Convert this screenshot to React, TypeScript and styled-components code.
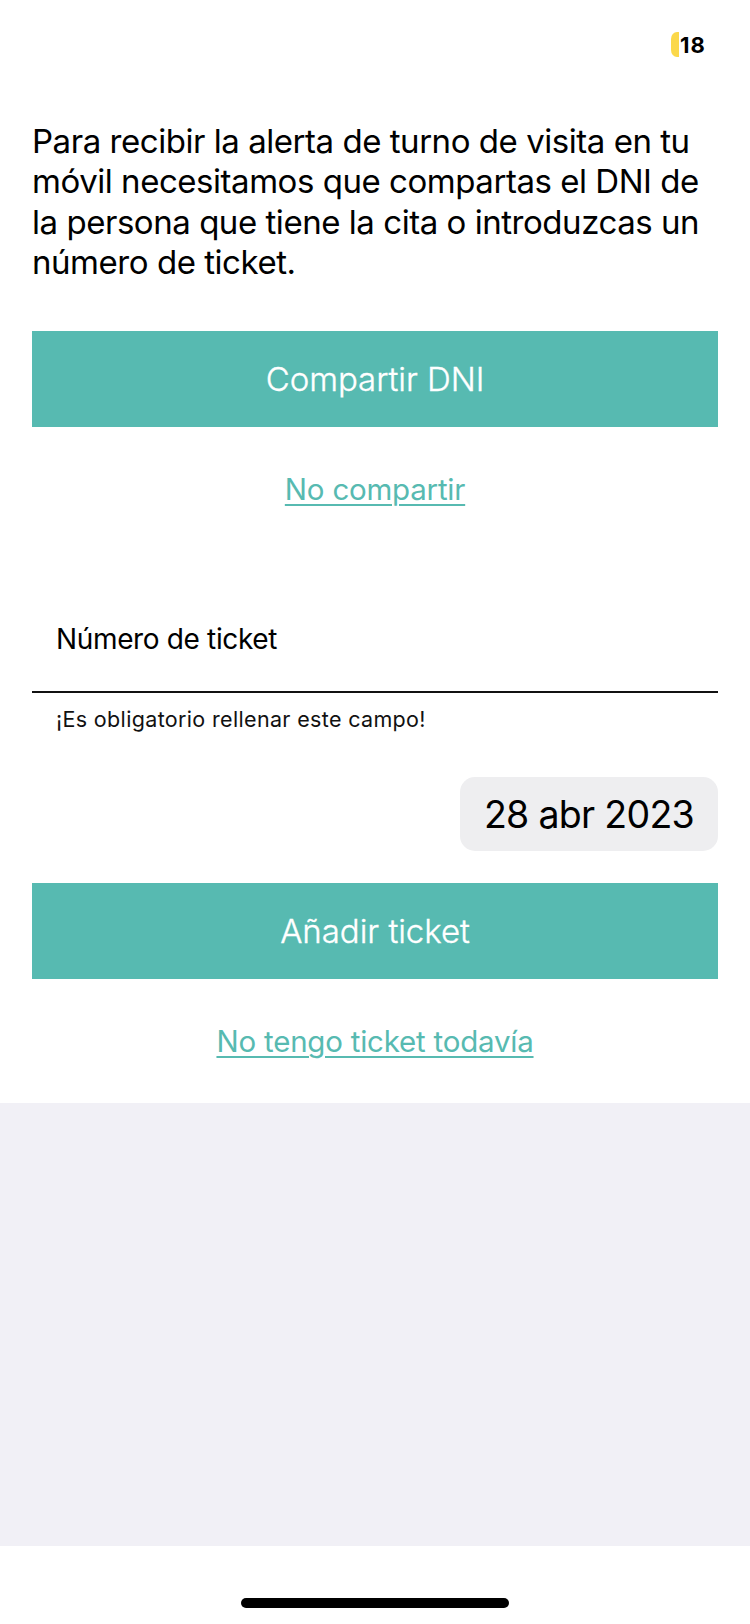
import React from "react";
import styled, { createGlobalStyle } from "styled-components";

const GlobalStyle = createGlobalStyle`
  * { box-sizing: border-box; }
  body {
    margin: 0;
    background: #ffffff;
    color: #000000;
    font-family: Inter, "Liberation Sans", sans-serif;
  }
`;

const Screen = styled.div`
  width: 750px;
  height: 1624px;
  display: flex;
  flex-direction: column;
  background: #ffffff;
  overflow: hidden;
`;

const StatusBar = styled.header`
  height: 121px;
  padding: 32px 44px 0 0;
  display: flex;
  justify-content: flex-end;
  align-items: flex-start;
`;

const Battery = styled.span`
  width: 8px;
  height: 25px;
  border-radius: 6px 0 0 6px / 7px 0 0 7px;
  background: #fbd84a;
`;

const BatteryLevel = styled.span`
  width: 27px;
  padding: 1px 0 0 1px;
  font-size: 22px;
  line-height: 25px;
  font-weight: 700;
  letter-spacing: 1px;
  white-space: nowrap;
`;

const Content = styled.main`
  height: 982px;
  padding: 0 32px;
  display: flex;
  flex-direction: column;
`;

const Intro = styled.p`
  margin: 0 0 48.8px;
  font-size: 33px;
  line-height: 40.3px;
  letter-spacing: -0.46px;
  white-space: nowrap;
`;

const PrimaryButton = styled.button`
  height: 96px;
  flex: none;
  border: 0;
  padding: 0;
  background: #57bab1;
  color: #ffffff;
  font: 300 33px/96px Inter, "Liberation Sans", sans-serif;
  letter-spacing: -0.04px;
  -webkit-text-stroke: 0.35px #ffffff;
`;

const TextLink = styled.a`
  align-self: center;
  margin-top: 44px;
  height: 36px;
  color: #57bab1;
  font-size: 29.5px;
  line-height: 36px;
  letter-spacing: -0.22px;
  white-space: nowrap;
  text-decoration: underline;
  text-decoration-thickness: 2px;
  text-underline-offset: 4px;
`;

const Field = styled.label`
  margin-top: 84px;
  height: 102px;
  display: block;
  padding: 31px 24px 0;
  border-bottom: 2px solid #111111;
  font-size: 28px;
  line-height: 34px;
  letter-spacing: -0.35px;
`;

const FieldError = styled.div`
  margin-top: 13px;
  height: 27px;
  padding-left: 24px;
  font-size: 21.5px;
  line-height: 27px;
  letter-spacing: 0.34px;
  color: #111111;
`;

const DateChip = styled.div`
  align-self: flex-end;
  width: 258px;
  height: 74px;
  margin: 44px 0 32px;
  border-radius: 15px;
  background: #eeeef0;
  font-size: 37.5px;
  line-height: 75px;
  text-align: center;
  letter-spacing: -0.7px;
  white-space: nowrap;
`;

const Backdrop = styled.div`
  height: 443px;
  background: #f1f0f6;
`;

const HomeArea = styled.footer`
  flex: 1;
  display: flex;
  justify-content: center;
  padding-top: 52px;
`;

const HomeIndicator = styled.div`
  width: 268px;
  height: 10px;
  border-radius: 5px;
  background: #000000;
`;

export default function App() {
  return (
    <>
      <GlobalStyle />
      <Screen>
        <StatusBar>
          <Battery />
          <BatteryLevel>18</BatteryLevel>
        </StatusBar>
        <Content>
          <Intro>
            Para recibir la alerta de turno de visita en tu
            <br />
            móvil necesitamos que compartas el DNI de
            <br />
            la persona que tiene la cita o introduzcas un
            <br />
            número de ticket.
          </Intro>
          <PrimaryButton>Compartir DNI</PrimaryButton>
          <TextLink>No compartir</TextLink>
          <Field>Número de ticket</Field>
          <FieldError>¡Es obligatorio rellenar este campo!</FieldError>
          <DateChip>28 abr 2023</DateChip>
          <PrimaryButton>Añadir ticket</PrimaryButton>
          <TextLink>No tengo ticket todavía</TextLink>
        </Content>
        <Backdrop />
        <HomeArea>
          <HomeIndicator />
        </HomeArea>
      </Screen>
    </>
  );
}
